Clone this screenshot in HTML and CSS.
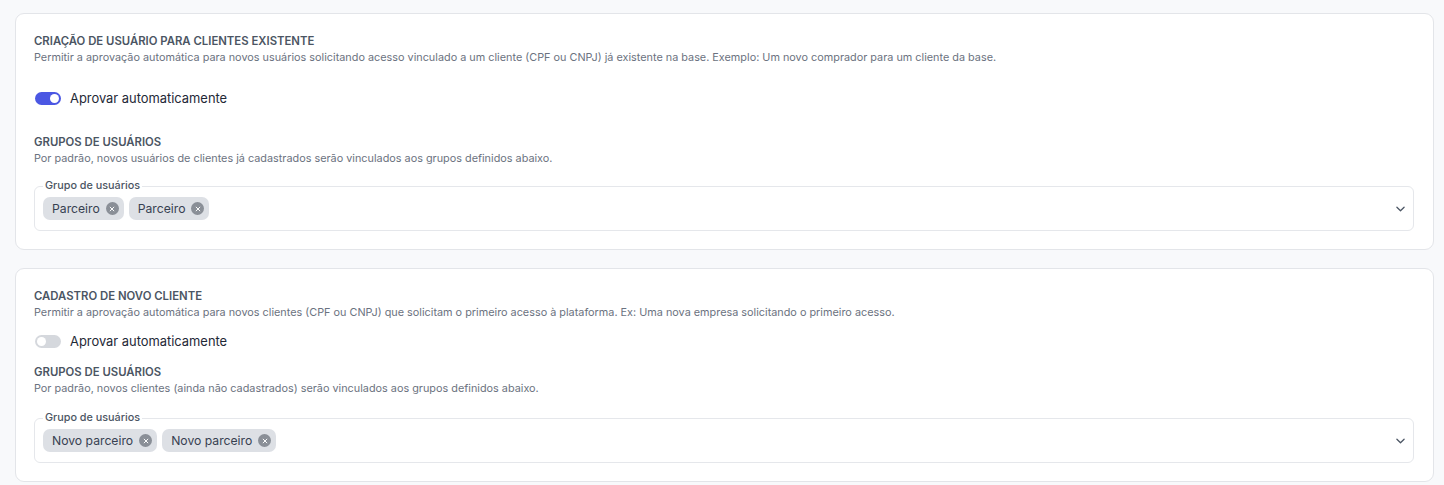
FILE: index.html
```html
<!DOCTYPE html>
<html lang="pt-BR">
<head>
<meta charset="utf-8">
<title>Aprovação de usuários</title>
<link rel="stylesheet" href="styles.css">
</head>
<body>
<main class="page">
  <section class="card">
    <h2 class="section-title">Criação de usuário para clientes existente</h2>
    <p class="section-desc">Permitir a aprovação automática para novos usuários solicitando acesso vinculado a um cliente (CPF ou CNPJ) já existente na base. Exemplo: Um novo comprador para um cliente da base.</p>
    <label class="switch-row switch-row--spaced">
      <span class="switch switch--on"><span class="knob"></span></span>
      <span class="switch-label">Aprovar automaticamente</span>
    </label>
    <h3 class="section-title">Grupos de usuários</h3>
    <p class="section-desc">Por padrão, novos usuários de clientes já cadastrados serão vinculados aos grupos definidos abaixo.</p>
    <fieldset class="select">
      <legend class="select-legend">Grupo de usuários</legend>
      <div class="chips">
        <span class="chip">Parceiro<span class="chip-x"><svg viewBox="0 0 8 8" width="6" height="6"><path d="M1.5 1.5l5 5M6.5 1.5l-5 5" stroke="#fff" stroke-width="1.3" stroke-linecap="round"/></svg></span></span>
        <span class="chip">Parceiro<span class="chip-x"><svg viewBox="0 0 8 8" width="6" height="6"><path d="M1.5 1.5l5 5M6.5 1.5l-5 5" stroke="#fff" stroke-width="1.3" stroke-linecap="round"/></svg></span></span>
      </div>
      <svg class="chevron" viewBox="0 0 10 6" width="9" height="6"><path d="M1 1l4 4 4-4" fill="none" stroke="#4b5563" stroke-width="1.4" stroke-linecap="round" stroke-linejoin="round"/></svg>
    </fieldset>
  </section>

  <section class="card card--new-client">
    <h2 class="section-title">Cadastro de novo cliente</h2>
    <p class="section-desc">Permitir a aprovação automática para novos clientes (CPF ou CNPJ) que solicitam o primeiro acesso à plataforma. Ex: Uma nova empresa solicitando o primeiro acesso.</p>
    <label class="switch-row">
      <span class="switch"><span class="knob"></span></span>
      <span class="switch-label">Aprovar automaticamente</span>
    </label>
    <h3 class="section-title">Grupos de usuários</h3>
    <p class="section-desc">Por padrão, novos clientes (ainda não cadastrados) serão vinculados aos grupos definidos abaixo.</p>
    <fieldset class="select">
      <legend class="select-legend">Grupo de usuários</legend>
      <div class="chips">
        <span class="chip">Novo parceiro<span class="chip-x"><svg viewBox="0 0 8 8" width="6" height="6"><path d="M1.5 1.5l5 5M6.5 1.5l-5 5" stroke="#fff" stroke-width="1.3" stroke-linecap="round"/></svg></span></span>
        <span class="chip">Novo parceiro<span class="chip-x"><svg viewBox="0 0 8 8" width="6" height="6"><path d="M1.5 1.5l5 5M6.5 1.5l-5 5" stroke="#fff" stroke-width="1.3" stroke-linecap="round"/></svg></span></span>
      </div>
      <svg class="chevron" viewBox="0 0 10 6" width="9" height="6"><path d="M1 1l4 4 4-4" fill="none" stroke="#4b5563" stroke-width="1.4" stroke-linecap="round" stroke-linejoin="round"/></svg>
    </fieldset>
  </section>
</main>
</body>
</html>
```

FILE: styles.css
```css
* { box-sizing: border-box; }

html, body {
  margin: 0;
  padding: 0;
  background: #f8f9fb;
}

body {
  font-family: Inter, "Noto Sans", "Liberation Sans", sans-serif;
  color: #1f2937;
}

.page {
  display: flex;
  flex-direction: column;
  gap: 18px;
  padding: 13px 10px 0 15px;
}

.card {
  background: #fff;
  border: 1px solid #e3e5e9;
  border-radius: 9px;
  padding: 19px 19px 18px 18px;
}

.section-title {
  margin: 0;
  font-size: 11.35px;
  line-height: 16px;
  font-weight: 600;
  text-transform: uppercase;
  color: #4b5563;
}

.section-desc {
  margin: 1px 0 0;
  font-size: 10.85px;
  line-height: 15px;
  color: #6b7280;
}

.switch-row {
  display: flex;
  align-items: center;
  gap: 9px;
  margin: 12px 0 14px;
  height: 18px;
}

.switch-row--spaced {
  margin: 24px 0 27px;
}

.switch {
  position: relative;
  width: 26px;
  height: 13px;
  border-radius: 7px;
  background: #d5d8dd;
  margin-left: 1px;
}

.switch--on {
  background: #4b57e3;
}

.knob {
  position: absolute;
  top: 2px;
  left: 2px;
  width: 9px;
  height: 9px;
  border-radius: 50%;
  background: #fff;
}

.switch--on .knob {
  left: 15px;
}

.switch-label {
  font-size: 12.9px;
  color: #1f2937;
}

.select {
  position: relative;
  margin: 14px 0 0;
  padding: 0 8px 10px;
  border: 1px solid #e5e7eb;
  border-radius: 6px;
  min-width: 0;
  display: flex;
  align-items: center;
}

.card--new-client .select {
  margin-top: 16px;
}

.select-legend {
  padding: 0 2px;
  font-size: 10.8px;
  line-height: 12px;
  font-weight: 500;
  color: #4b5563;
}

.chips {
  display: flex;
  gap: 5px;
  flex: 1;
  margin-top: 5px;
}

.chip {
  display: inline-flex;
  align-items: center;
  gap: 6px;
  height: 23px;
  padding: 0 5px 0 9px;
  border-radius: 7px;
  background: #dde0e5;
  font-size: 12.2px;
  color: #374151;
}

.chip-x {
  display: inline-flex;
  align-items: center;
  justify-content: center;
  width: 13px;
  height: 13px;
  border-radius: 50%;
  background: #8a8f97;
}

.chevron {
  margin-top: 5px;
  margin-right: 0;
}
```
